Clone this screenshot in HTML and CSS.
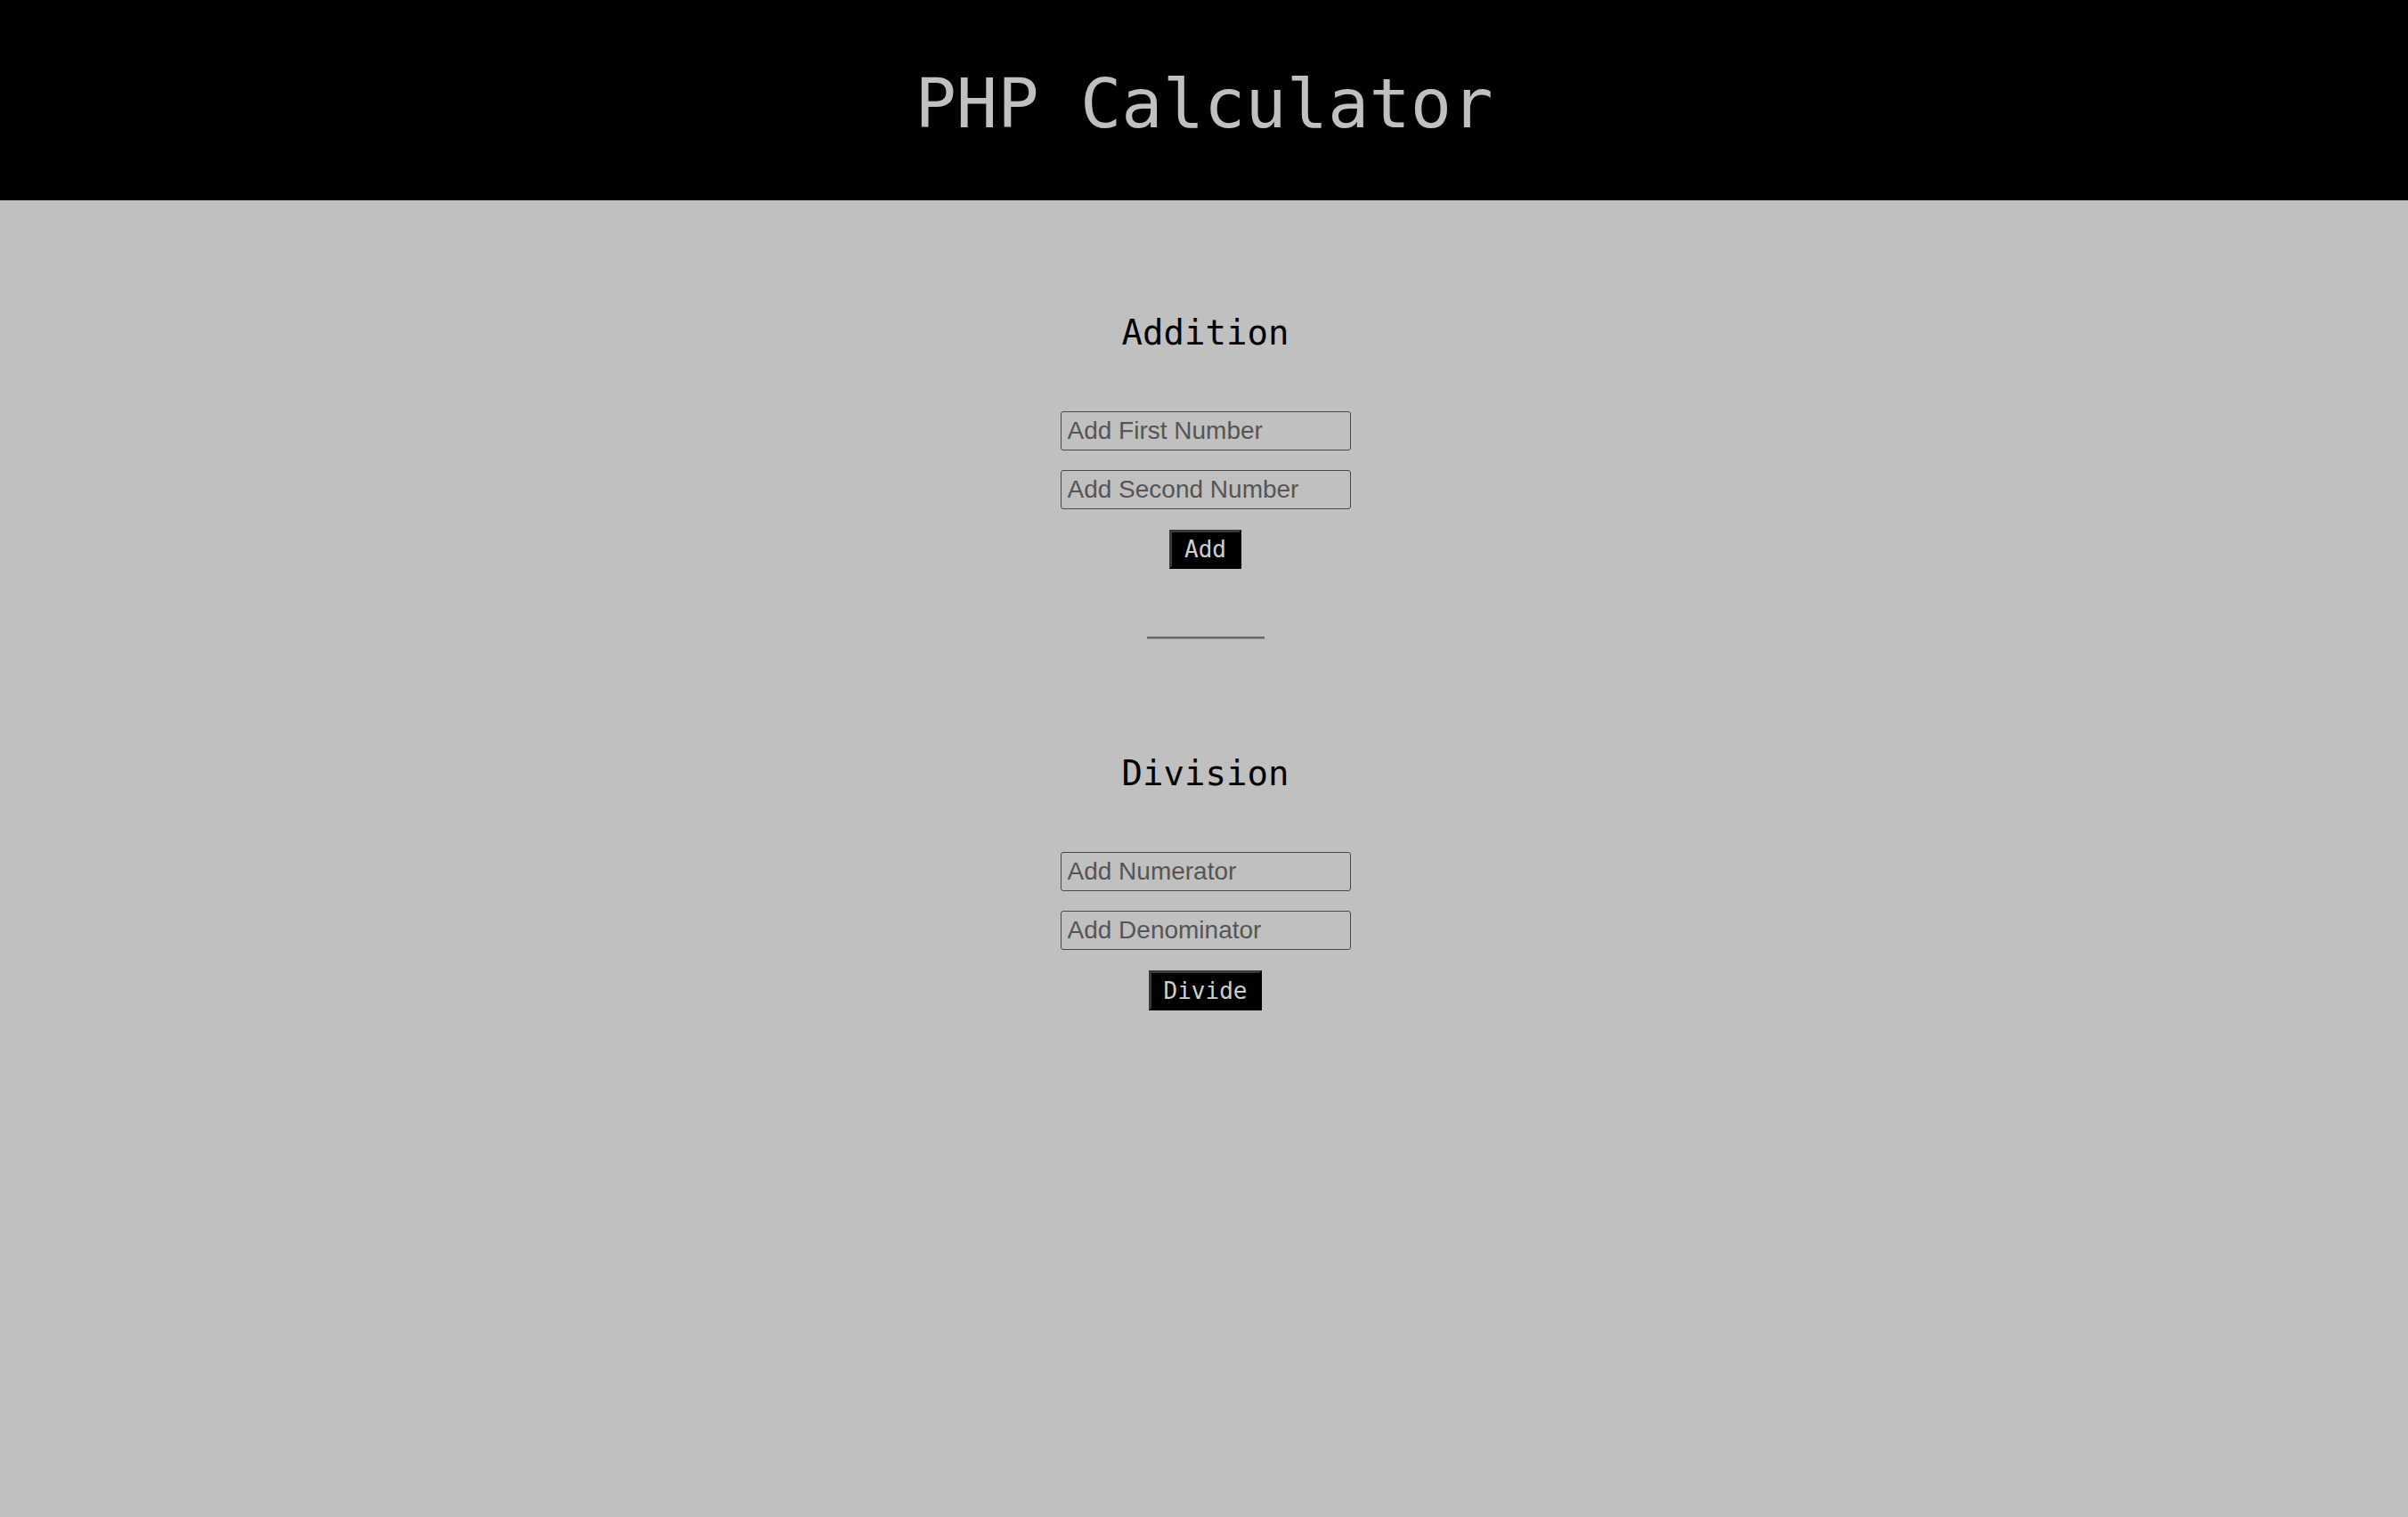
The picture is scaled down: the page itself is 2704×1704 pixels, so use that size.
FILE: index.html
```html
<!DOCTYPE html>
<html lang="en">
<head>
<meta charset="utf-8">
<title>PHP Calculator</title>
<link rel="stylesheet" href="styles.css">
</head>
<body>
<header class="site-header">
  <h1 class="site-title">PHP Calculator</h1>
</header>
<main class="content">
  <section class="calc">
    <h2 class="calc-title">Addition</h2>
    <form class="calc-form">
      <input class="calc-input" type="text" placeholder="Add First Number">
      <input class="calc-input" type="text" placeholder="Add Second Number">
      <button class="calc-button" type="button">Add</button>
    </form>
  </section>
  <hr class="divider">
  <section class="calc">
    <h2 class="calc-title">Division</h2>
    <form class="calc-form">
      <input class="calc-input" type="text" placeholder="Add Numerator">
      <input class="calc-input" type="text" placeholder="Add Denominator">
      <button class="calc-button calc-button-tall" type="button">Divide</button>
    </form>
  </section>
</main>
</body>
</html>
```

FILE: styles.css
```css
* { box-sizing: border-box; }
html, body {
  margin: 0;
  padding: 0;
  background: #c0c0c0;
  min-height: 100%;
}
body {
  font-family: "DejaVu Sans Mono", "Liberation Mono", monospace;
}
.site-header {
  background: #000;
  height: 225px;
  padding-top: 78px;
  text-align: center;
}
.site-title {
  margin: 0;
  font-family: "DejaVu Sans Mono", monospace;
  font-weight: normal;
  font-size: 77px;
  line-height: 78px;
  color: #c0c0c0;
}
.content {
  padding-top: 129px;
  padding-left: 3px;
  display: flex;
  flex-direction: column;
  align-items: center;
}
.calc {
  display: flex;
  flex-direction: column;
  align-items: center;
}
.calc-title {
  margin: 0 0 68px;
  font-family: "DejaVu Sans Mono", monospace;
  font-weight: normal;
  font-size: 39px;
  line-height: 40px;
  height: 40px;
  color: #000;
}
.calc-form {
  display: flex;
  flex-direction: column;
  align-items: center;
}
.calc-input {
  width: 326px;
  height: 44px;
  margin: 0 0 22px;
  padding: 0 7px;
  border: 1px solid #4a4a4a;
  border-radius: 3px;
  background: transparent;
  font-family: "Liberation Sans", Arial, sans-serif;
  font-size: 28px;
  color: #222;
}
.calc-input::placeholder { color: #555; }
.calc-input + .calc-input { margin-bottom: 23px; }
.calc-button {
  height: 44px;
  padding: 0 14px;
  border: 3px outset #3a3a3a;
  background: #000;
  color: #cfcfcf;
  font-family: "DejaVu Sans Mono", monospace;
  font-size: 26px;
  line-height: 30px;
}
.calc-button-tall { height: 45px; }
.divider {
  width: 132px;
  height: 0;
  margin: 76px 0 131px;
  border: 0;
  border-top: 2px solid #6a6a6a;
  border-bottom: 1px solid #8e8e8e;
}
```
